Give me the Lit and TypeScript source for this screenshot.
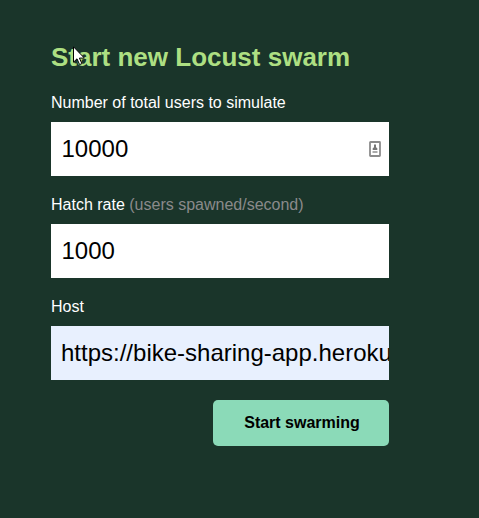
import { LitElement, html, css } from "lit";
import { customElement } from "lit/decorators.js";

@customElement("app-root")
export class AppRoot extends LitElement {
  static styles = css`
    :host { display: block; position: relative; box-sizing: border-box; height: 518px; padding: 42px 90px 0 51px; background: #1a352a; color: #fff; font-family: "Liberation Sans", Arial, sans-serif; overflow: hidden; }
    h2 { margin: 0 0 22px; font-size: 26px; line-height: 30px; color: #addf82; white-space: nowrap; }
    form { display: flex; flex-direction: column; margin: 0; }
    label { font-size: 16px; line-height: 18px; margin-bottom: 10px; }
    .hint { color: #8a8a8a; }
    .field { position: relative; height: 54px; margin-bottom: 20px; }
    input { display: block; box-sizing: border-box; width: 100%; height: 54px; border: 0; border-radius: 0; padding: 0 0 0 10px; font: 24px "Liberation Sans", Arial, sans-serif; color: #000; background: #fff; outline: none; }
    .number { padding-left: 10.5px; }
    .filled { background: #e8f0fe; }
    .contact { position: absolute; right: 8px; top: 19px; }
    button { align-self: flex-end; width: 176px; height: 46px; padding: 0 0 0 2px; border: 0; border-radius: 5px; background: #8bdab8; color: #000; font: bold 16px "Liberation Sans", Arial, sans-serif; }
    .pointer { position: absolute; left: 73px; top: 46px; }
  `;

  render() {
    return html`
      <h2>Start new Locust swarm</h2>
      <form>
        <label for="users">Number of total users to simulate</label>
        <div class="field">
          <input id="users" class="number" value="10000" />
          <svg class="contact" width="12" height="16" viewBox="0 0 12 16"><rect x="1" y="1" width="10" height="14" rx=".5" fill="none" stroke="#8c8c8c" stroke-width="1.8"/><path d="M5 3.5h2v2.7l1.3 1V9H3.7V7.2L5 6.2z" fill="#777"/><path d="M3.5 10h5v2h-5z" fill="#aaa"/></svg>
        </div>
        <label for="rate">Hatch rate <span class="hint">(users spawned/second)</span></label>
        <div class="field"><input id="rate" class="number" value="1000" /></div>
        <label for="host">Host</label>
        <div class="field"><input id="host" class="filled" value="https://bike-sharing-app.herokuapp.com" /></div>
        <button type="button">Start swarming</button>
      </form>
      <svg class="pointer" width="13" height="20" viewBox="0 0 13 20"><path d="M.5.8v15.4l3.5-3.4 2.6 5.8 2.3-1-2.5-5.5h5z" fill="#fff" stroke="#000"/></svg>
    `;
  }
}
